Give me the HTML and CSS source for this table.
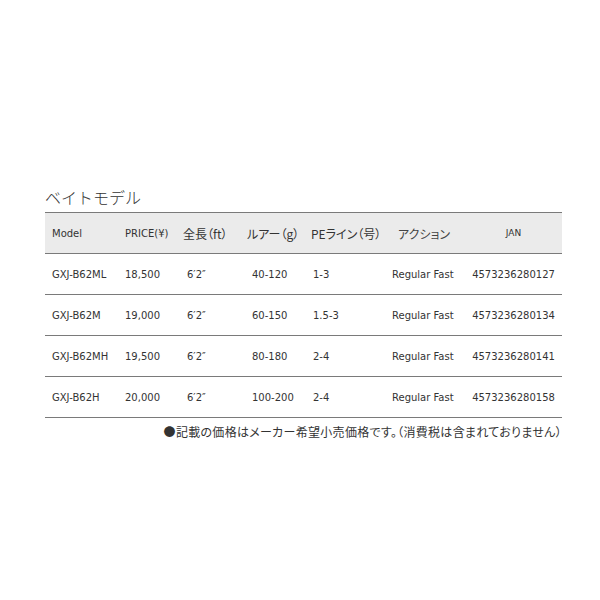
FILE: index.html
```html
<!DOCTYPE html>
<html lang="ja">
<head>
<meta charset="utf-8">
<link rel="stylesheet" href="styles.css">
</head>
<body>
<div class="wrap">
  <h2 class="title">ベイトモデル</h2>
  <table class="spec">
    <colgroup>
      <col class="c1"><col class="c2"><col class="c3"><col class="c4"><col class="c5"><col class="c6"><col class="c7">
    </colgroup>
    <thead>
      <tr>
        <th class="h-model">Model</th>
        <th class="h-price">PRICE(¥)</th>
        <th class="h-len">全長（ft）</th>
        <th class="h-lure">ルアー（g）</th>
        <th class="h-pe">PEライン（号）</th>
        <th class="h-act">アクション</th>
        <th class="h-jan">JAN</th>
      </tr>
    </thead>
    <tbody>
      <tr><td class="d-model">GXJ-B62ML</td><td class="d-price">18,500</td><td class="d-len">6′2″</td><td class="d-lure">40-120</td><td class="d-pe">1-3</td><td class="d-act">Regular Fast</td><td class="d-jan">4573236280127</td></tr>
      <tr><td class="d-model">GXJ-B62M</td><td class="d-price">19,000</td><td class="d-len">6′2″</td><td class="d-lure">60-150</td><td class="d-pe">1.5-3</td><td class="d-act">Regular Fast</td><td class="d-jan">4573236280134</td></tr>
      <tr><td class="d-model">GXJ-B62MH</td><td class="d-price">19,500</td><td class="d-len">6′2″</td><td class="d-lure">80-180</td><td class="d-pe">2-4</td><td class="d-act">Regular Fast</td><td class="d-jan">4573236280141</td></tr>
      <tr><td class="d-model">GXJ-B62H</td><td class="d-price">20,000</td><td class="d-len">6′2″</td><td class="d-lure">100-200</td><td class="d-pe">2-4</td><td class="d-act">Regular Fast</td><td class="d-jan">4573236280158</td></tr>
    </tbody>
  </table>
  <p class="note">●記載の価格はメーカー希望小売価格です。（消費税は含まれておりません）</p>
</div>
</body>
</html>
```
FILE: styles.css
```css
html, body {
  margin: 0;
  padding: 0;
  background: #ffffff;
}
body {
  font-family: "DejaVu Sans", "Noto Sans CJK JP", sans-serif;
  color: #333333;
}
.wrap {
  width: 517px;
  margin-left: 45px;
  padding-top: 186px;
}
.title {
  margin: 0;
  height: 26px;
  font-family: "Noto Sans CJK JP", sans-serif;
  font-weight: 300;
  font-size: 16px;
  line-height: 22px;
  color: #333333;
}
.spec {
  width: 517px;
  border-collapse: collapse;
  table-layout: fixed;
}
.c1 { width: 73px; }
.c2 { width: 58px; }
.c3 { width: 64px; }
.c4 { width: 64px; }
.c5 { width: 81px; }
.c6 { width: 80px; }
.c7 { width: 97px; }
.spec th, .spec td {
  height: 40px;
  padding: 0 0 0 7px;
  border-top: 1px solid #7a7a7a;
  border-bottom: 1px solid #7a7a7a;
  text-align: left;
  white-space: nowrap;
  font-weight: normal;
}
.spec th {
  background: #ebebeb;
  font-size: 11px;
  font-family: "DejaVu Sans", "Noto Sans CJK JP", sans-serif;
}
.spec td {
  font-size: 10px;
}
.h-len, .h-lure, .h-pe, .h-act {
  font-family: "Noto Sans CJK JP", sans-serif !important;
  font-size: 12px !important;
  font-feature-settings: "palt";
}
.h-act { color: #444444; }
.h-price { font-size: 10px !important; }
.h-model { font-size: 10px !important; }
.h-act { padding-left: 13px !important; }
.h-jan, .d-jan { text-align: center !important; padding-left: 0 !important; }
.h-jan { font-size: 9px !important; }
.d-len { padding-left: 11px !important; }
.d-lure { padding-left: 12px !important; }
.d-pe { padding-left: 9px !important; }
.note {
  margin: 6px 0 0 0;
  text-align: right;
  font-family: "Noto Sans CJK JP", sans-serif;
  font-size: 12px;
  line-height: 16px;
  white-space: nowrap;
  font-feature-settings: "palt";
  letter-spacing: 0.3px;
}
```
